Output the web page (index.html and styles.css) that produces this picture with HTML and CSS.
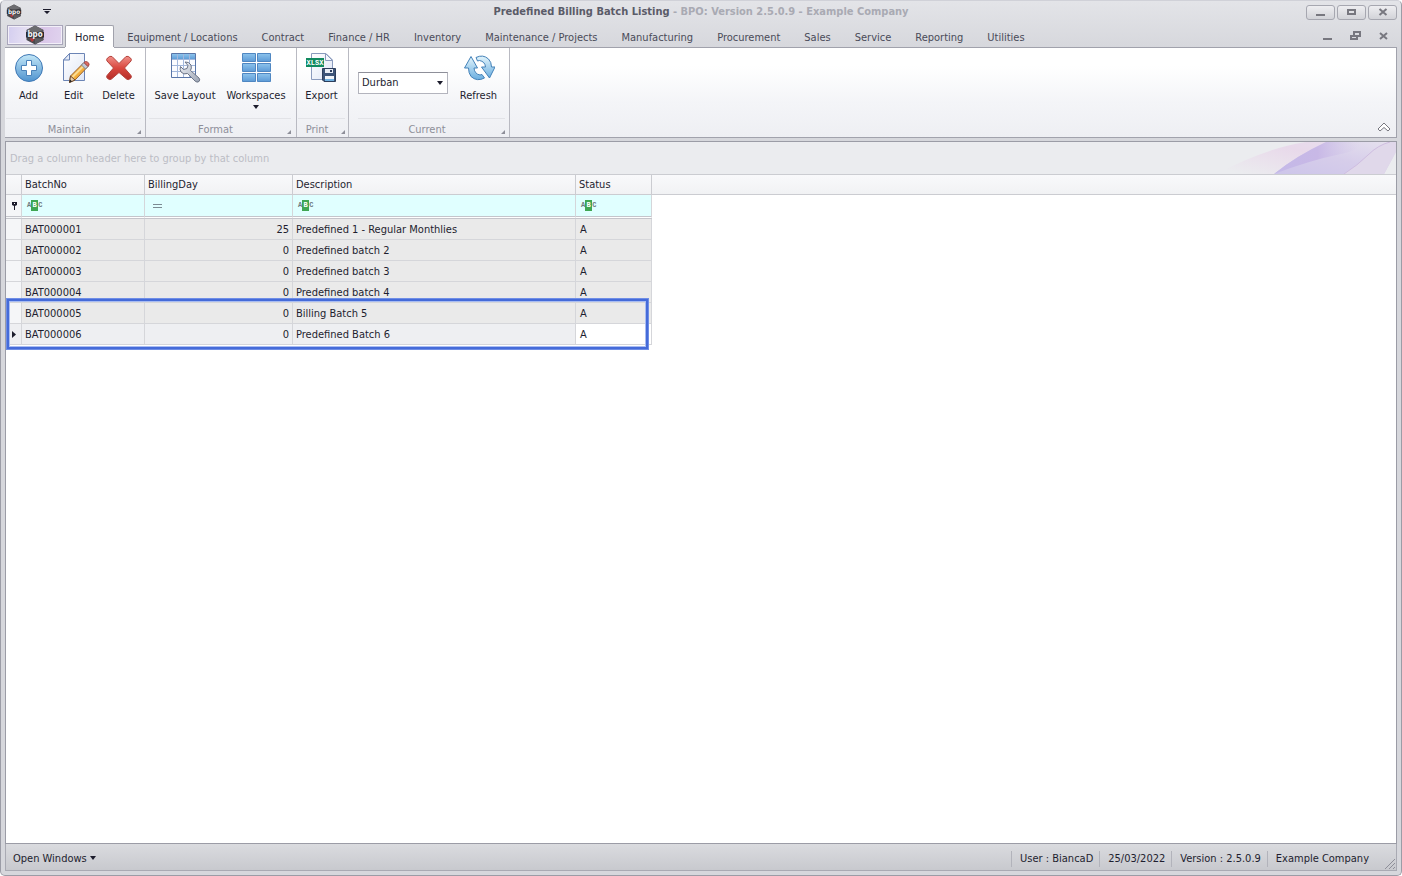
FILE: index.html
```html
<!DOCTYPE html>
<html lang="en">
<head>
  <meta charset="UTF-8">
  <meta name="viewport" content="width=device-width, initial-scale=1.0">
  <title>Predefined Billing Batch Listing</title>
  <link rel="stylesheet" href="styles.css">
</head>
<body>
  <svg class="defs" width="0" height="0" aria-hidden="true">
    <defs>
      <linearGradient id="blue" x1="0" y1="0" x2="0" y2="1">
        <stop offset="0" stop-color="#c4e8f8"/><stop offset="1" stop-color="#4f93cf"/>
      </linearGradient>
      <linearGradient id="tile" x1="0" y1="0" x2="0" y2="1">
        <stop offset="0" stop-color="#8cc3ec"/><stop offset="1" stop-color="#5c9ad6"/>
      </linearGradient>
      <linearGradient id="red" x1="0" y1="0" x2="0" y2="1">
        <stop offset="0" stop-color="#f0908a"/><stop offset="0.5" stop-color="#d9483f"/><stop offset="1" stop-color="#b52c27"/>
      </linearGradient>
      <linearGradient id="paper" x1="0" y1="0" x2="1" y2="1">
        <stop offset="0" stop-color="#ffffff"/><stop offset="1" stop-color="#dfe6f5"/>
      </linearGradient>
      <linearGradient id="steel" x1="0" y1="0" x2="1" y2="1">
        <stop offset="0" stop-color="#f2f4f8"/><stop offset="1" stop-color="#9aa3b3"/>
      </linearGradient>
      <linearGradient id="arrow" x1="0" y1="0" x2="0" y2="1">
        <stop offset="0" stop-color="#e3f5fc"/><stop offset="1" stop-color="#6aaee0"/>
      </linearGradient>
      <linearGradient id="lilac" x1="0" y1="1" x2="1" y2="0">
        <stop offset="0" stop-color="#cdc5ea"/><stop offset="0.5" stop-color="#d6cdea"/><stop offset="1" stop-color="#e6e2ee"/>
      </linearGradient>
      <linearGradient id="violet" x1="0" y1="0" x2="1" y2="0">
        <stop offset="0" stop-color="#c4b9e8"/><stop offset="0.5" stop-color="#c8b8e6"/><stop offset="1" stop-color="#d6cdea" stop-opacity="0"/>
      </linearGradient>
      <linearGradient id="pink" x1="0" y1="1" x2="1" y2="0">
        <stop offset="0.1" stop-color="#ead8ea" stop-opacity="0"/><stop offset="0.7" stop-color="#e8d9ea"/><stop offset="1" stop-color="#e8deee"/>
      </linearGradient>
      <symbol id="logo" viewBox="0 0 20 20">
        <path d="M10 0.5 18.500 5V15L10 19.500 1.500 15V5Z" fill="#4a4a4e"/>
        <path d="M10 0.5 18.500 5 10 8 1.500 5Z" fill="#6c6c70"/>
        <path d="M10 13 18.500 14V15L10 19.500Z" fill="#5c5c61"/>
        <path d="M1 7H19V12.500H1Z" fill="#2c2c30"/>
        <path d="M4.500 13.500 8.500 13 9 15 7 17Z" fill="#b3383b"/>
        <text x="10" y="12" text-anchor="middle" font-size="8" font-weight="bold" fill="#f4f4f6">bpo</text>
      </symbol>
    </defs>
  </svg>

  <div class="window">
    <header class="title-bar">
      <div class="quick-access">
        <svg width="16" height="16" aria-hidden="true"><use href="#logo"/></svg>
        <button class="icon-btn" aria-label="Customize Quick Access Toolbar">
          <svg width="8" height="6" viewBox="0 0 8 6"><path d="M0 0H8V1H0ZM1 2H7L4 5Z" fill="#1c1c2c"/></svg>
        </button>
      </div>
      <h1 class="title">Predefined Billing Batch Listing <span>- BPO: Version 2.5.0.9 - Example Company</span></h1>
      <div class="window-controls">
        <button aria-label="Minimize"><svg width="10" height="8" viewBox="0 0 10 8"><path d="M0 6H9V8H0Z" fill="#77777f"/></svg></button>
        <button aria-label="Maximize"><svg width="10" height="8" viewBox="0 0 10 8"><rect x="1" y="2" width="7" height="4" fill="none" stroke="#77777f" stroke-width="2"/></svg></button>
        <button aria-label="Close"><svg width="10" height="8" viewBox="0 0 10 8"><path d="M1.500 1 8.500 7M8.500 1 1.500 7" stroke="#77777f" stroke-width="2"/></svg></button>
      </div>
    </header>

    <nav class="tabs">
      <button class="app-btn" aria-label="Application menu"><svg width="20" height="20"><use href="#logo"/></svg></button>
      <a href="#home" class="tab active">Home</a>
      <a href="#equipment" class="tab">Equipment / Locations</a>
      <a href="#contract" class="tab">Contract</a>
      <a href="#finance" class="tab">Finance / HR</a>
      <a href="#inventory" class="tab">Inventory</a>
      <a href="#maintenance" class="tab">Maintenance / Projects</a>
      <a href="#manufacturing" class="tab">Manufacturing</a>
      <a href="#procurement" class="tab">Procurement</a>
      <a href="#sales" class="tab">Sales</a>
      <a href="#service" class="tab">Service</a>
      <a href="#reporting" class="tab">Reporting</a>
      <a href="#utilities" class="tab">Utilities</a>
      <div class="child-controls">
        <button class="icon-btn" aria-label="Minimize child"><svg width="12" height="10" viewBox="0 0 12 10"><path d="M1 7H10V9H1Z" fill="#77777f"/></svg></button>
        <button class="icon-btn" aria-label="Restore child"><svg width="12" height="10" viewBox="0 0 12 10"><path d="M4 4V1H10V5H7M1 5H7V8H1Z" fill="none" stroke="#77777f" stroke-width="2"/></svg></button>
        <button class="icon-btn" aria-label="Close child"><svg width="12" height="10" viewBox="0 0 12 10"><path d="M2 2 9 8M9 2 2 8" stroke="#77777f" stroke-width="2"/></svg></button>
      </div>
    </nav>

    <section class="ribbon" id="home">
      <div class="group maintain">
        <div class="tools">
          <button class="tool">
            <svg width="32" height="32" viewBox="0 0 32 32"><circle cx="16" cy="16" r="13.500" fill="url(#blue)" stroke="#3f78b5"/><path d="M13.500 8.500H18.500V13.500H23.500V18.500H18.500V23.500H13.500V18.500H8.500V13.500H13.500Z" fill="#fff" stroke="#4a82ba"/></svg>
            Add
          </button>
          <button class="tool">
            <svg width="32" height="32" viewBox="0 0 32 32"><path d="M11.500 1.500H26.500V28.500H5.500V8Z" fill="url(#paper)" stroke="#6b84b5"/><path d="M11.500 1.500V8H5.500Z" fill="#e6ecf8" stroke="#6b84b5"/><path d="M11.500 30.500 12.500 24 25.500 11 29.500 15 17 28Z" fill="#f3ae3c" stroke="#9a6330"/><path d="M14.500 25 26.500 13" stroke="#fbdc93" stroke-width="2"/><path d="M11.500 30.500 12.500 24 17 28Z" fill="#e9cfaa" stroke="#6b4a33"/><path d="M11.500 30.500 12 27.500 14 29.300Z" fill="#222"/><path d="M23.500 13 26 10.500 30 14.500 27.500 17Z" fill="#c3cad6" stroke="#7c8494"/><path d="M26 10.500 27.500 9.500Q29.500 9.500 31 11.500 31.500 13 30 14.500Z" fill="#dd6b62" stroke="#a3463f"/></svg>
            Edit
          </button>
          <button class="tool">
            <svg width="32" height="32" viewBox="0 0 32 32"><path d="M9 4.500 16 11.500 23 4.500Q25 3.500 27.500 6 29 7.500 28 9L21.500 16 28 23.500Q29 25 27.500 26.500 25 28.500 23.500 27L16 20.500 8.500 27Q7 28.500 4.500 26.500 3 25 4 23.500L10.500 16 4 9Q3 7.500 4.500 6 7 3.500 9 4.500Z" fill="url(#red)" stroke="#b5423b"/></svg>
            Delete
          </button>
        </div>
        <div class="caption"><span>Maintain</span><i class="launcher"></i></div>
      </div>

      <div class="group format">
        <div class="tools">
          <button class="tool">
            <svg width="32" height="32" viewBox="0 0 32 32"><path d="M2.500 1.500H26.500V25.500H2.500Z" fill="#fbfcff" stroke="#5a76a8"/><path d="M3 2H26V7.500H3Z" fill="url(#tile)"/><path d="M3 7.500H26M3 13.500H26M3 19.500H26M8.500 2V25M14.500 2V25M20.500 2V25" stroke="#a3b8dc"/><path d="M16 10Q20 9.500 22 13 23 16 21.500 18.500L30 26Q31.500 28 30 29.500 28 31 26 29L18.500 21.500Q14.500 23 12 20 10.500 17.500 11.500 14.500L14.500 17.500 18 16.500 19 13.500Z" fill="url(#steel)" stroke="#6c7486"/></svg>
            Save Layout
          </button>
          <button class="tool">
            <svg width="32" height="32" viewBox="0 0 32 32"><g fill="url(#tile)" stroke="#4f87c2"><path d="M2.500 1.500H15.500V9.500H2.500Z"/><path d="M17.500 1.500H30.500V9.500H17.500Z"/><path d="M2.500 11.500H15.500V19.500H2.500Z"/><path d="M17.500 11.500H30.500V19.500H17.500Z"/><path d="M2.500 21.500H15.500V29.500H2.500Z"/><path d="M17.500 21.500H30.500V29.500H17.500Z"/></g></svg>
            Workspaces
            <i class="arrow"></i>
          </button>
        </div>
        <div class="caption"><span>Format</span><i class="launcher"></i></div>
      </div>

      <div class="group print">
        <div class="tools">
          <button class="tool">
            <svg width="32" height="32" viewBox="0 0 32 32"><path d="M5.500 1.500H20L26.500 8V27.500H5.500Z" fill="url(#paper)" stroke="#8a9bbd"/><path d="M19.500 1.500V8.500H26.500Z" fill="#f6f8fd" stroke="#8a9bbd"/><path d="M0 6H18V15H0Z" fill="#118a5f"/><text class="xlsx" x="9" y="13">XLSX</text><path d="M16.500 16.500H29.500V29.500H18L16.500 28Z" fill="#3d5478" stroke="#2d3e5c"/><path d="M19 17H27V21H19Z" fill="#e8ecf4"/><path d="M24 18H26V20H24Z" fill="#2d3e5c"/><path d="M19 24H28V29H19Z" fill="#f1f4f9"/><path d="M19 27H28V29H19Z" fill="#6fb0e0"/></svg>
            Export
          </button>
        </div>
        <div class="caption"><span>Print</span><i class="launcher"></i></div>
      </div>

      <div class="group current">
        <div class="tools">
          <div class="site">
            <select aria-label="Site">
              <option>Durban</option>
            </select>
            <i class="arrow"></i>
          </div>
          <button class="tool">
            <svg width="32" height="32" viewBox="0 0 32 32"><path d="M13 5.500Q20 2 25.500 7 28.500 10 28.500 15H32L26.500 26 18.500 15H22.500Q22 9.500 16.500 8.500L14.500 9Z" fill="url(#arrow)" stroke="#4381b8"/><path d="M21.500 26Q14 30 8 24.500 5.500 21 5.500 16H1.500L8 4.500 14.500 16H11Q11.500 22 17 23L19 22.500Z" fill="url(#arrow)" stroke="#4381b8"/></svg>
            Refresh
          </button>
        </div>
        <div class="caption"><span>Current</span><i class="launcher"></i></div>
      </div>

      <button class="icon-btn collapse" aria-label="Collapse the ribbon">
        <svg width="14" height="10" viewBox="0 0 14 10"><path d="M7 1 13 7 11 9 7 5.500 3 9 1 7Z" fill="#fff" stroke="#77777f"/></svg>
      </button>
    </section>

    <main class="listing">
      <div class="group-panel">
        <span>Drag a column header here to group by that column</span>
        <svg width="260" height="32" viewBox="0 0 260 32" aria-hidden="true">
          <path d="M80 32Q130 6 170 0H208Q180 18 148 32Z" fill="url(#pink)"/>
          <path d="M138 32Q160 14 190 0H260V10L248 32Z" fill="url(#lilac)"/>
          <path d="M138 32Q160 14 190 0H225Q225 8 205 12 175 18 138 32Z" fill="url(#violet)"/>
          <path d="M208 32Q222 23 232 13T254 0H260V10L248 32Z" fill="#e0d8ea"/>
          <path d="M208 32Q222 23 232 13T254 0" fill="none" stroke="#cfbde0"/>
        </svg>
      </div>

      <div class="grid">
        <table>
          <colgroup>
            <col class="c-mark"><col class="c-batch"><col class="c-day"><col class="c-desc"><col class="c-status"><col>
          </colgroup>
          <thead>
            <tr>
              <th></th><th>BatchNo</th><th>BillingDay</th><th>Description</th><th>Status</th><th></th>
            </tr>
            <tr class="filter">
              <td><svg width="7" height="9" viewBox="0 0 7 9"><path d="M1 1H6V4L4 5V9H3V5L1 4Z" fill="#1c1c2c"/><path d="M3 2H4V3H3Z" fill="#fff"/></svg></td>
              <td><label><span class="abc">A<b>B</b>C</span><input type="text" aria-label="Filter BatchNo"></label></td>
              <td><label><span class="eq"></span><input type="text" aria-label="Filter BillingDay"></label></td>
              <td><label><span class="abc">A<b>B</b>C</span><input type="text" aria-label="Filter Description"></label></td>
              <td><label><span class="abc">A<b>B</b>C</span><input type="text" aria-label="Filter Status"></label></td>
              <td></td>
            </tr>
          </thead>
          <tbody>
            <tr><td></td><td>BAT000001</td><td>25</td><td>Predefined 1 - Regular Monthlies</td><td>A</td><td></td></tr>
            <tr><td></td><td>BAT000002</td><td>0</td><td>Predefined batch 2</td><td>A</td><td></td></tr>
            <tr><td></td><td>BAT000003</td><td>0</td><td>Predefined batch 3</td><td>A</td><td></td></tr>
            <tr><td></td><td>BAT000004</td><td>0</td><td>Predefined batch 4</td><td>A</td><td></td></tr>
            <tr><td></td><td>BAT000005</td><td>0</td><td>Billing Batch 5</td><td>A</td><td></td></tr>
            <tr class="focused"><td><svg width="4" height="7" viewBox="0 0 4 7"><path d="M0 0 4 3.500 0 7Z" fill="#1c1c2c"/></svg></td><td>BAT000006</td><td>0</td><td>Predefined Batch 6</td><td>A</td><td></td></tr>
          </tbody>
        </table>
        <div class="highlight"></div>
      </div>
    </main>

    <footer class="status-bar">
      <button class="open-windows">Open Windows <i class="arrow"></i></button>
      <div class="status-items">
        <span>User : BiancaD</span>
        <span>25/03/2022</span>
        <span>Version : 2.5.0.9</span>
        <span>Example Company</span>
      </div>
      <svg class="grip" width="12" height="12" viewBox="0 0 12 12" aria-hidden="true"><path d="M1 11 11 1M5 11 11 5M9 11 11 9" stroke="#8e8f99"/></svg>
    </footer>
  </div>
</body>
</html>
```
FILE: styles.css
```css
* {
  box-sizing: border-box;
}
body {
  margin: 0;
  background: #fff;
  color: #1e1e2f;
  font-family: "DejaVu Sans Condensed", "DejaVu Sans", Tahoma, sans-serif;
  font-size: 11px;
  line-height: 14px;
}
button, input, select {
  font: inherit;
  color: inherit;
}
button {
  background: none;
  border: none;
  padding: 0;
}
svg {
  display: block;
}
.defs {
  position: absolute;
}
.window {
  display: flex;
  flex-direction: column;
  height: 100vh;
  padding: 0 4px 4px;
  border: 1px solid #9b9ca6;
  border-top-color: #d0d1d8;
  border-radius: 5px;
  background: linear-gradient(#e3e4e8, #d6d7dc 48px, #d6d7dc);
}

/* title bar */
.title-bar {
  display: grid;
  grid-template-columns: 1fr auto 1fr;
  align-items: center;
  height: 22px;
}
.quick-access {
  display: flex;
  align-items: center;
  gap: 17px;
  padding-left: 1px;
}
.title {
  margin: 0;
  font-size: 11px;
  color: #5a5b68;
}
.title span {
  color: #a9aab3;
}
.window-controls {
  display: flex;
  justify-content: flex-end;
  gap: 2px;
}
.window-controls button {
  display: flex;
  align-items: center;
  justify-content: center;
  width: 29px;
  height: 15px;
  border: 1px solid #a6a7b0;
  border-radius: 3px;
  background: linear-gradient(#eeeef1, #d2d3d8);
}
.icon-btn {
  display: flex;
  align-items: center;
  justify-content: center;
  min-width: 16px;
}

/* ribbon tabs */
.tabs {
  display: flex;
  align-items: flex-end;
  gap: 2px;
  height: 24px;
}
.app-btn {
  display: flex;
  align-items: center;
  justify-content: center;
  width: 56px;
  height: 20px;
  margin: 0 0 2px 2px;
  border: 1px solid #a9a6bb;
  box-shadow: inset 0 0 0 1px #f2eff8;
  background: linear-gradient(100deg, #d3cdef, #e8e2f3 40%, #d9c5e8 60%, #e0d3ee);
}
.tab {
  height: 22px;
  padding: 5px 10px 0;
  border: 1px solid transparent;
  border-bottom: none;
  color: #4a4b59;
  text-decoration: none;
  white-space: nowrap;
}
.tab.active {
  position: relative;
  padding: 5px 9px 0;
  border-color: #a1a2ac;
  border-radius: 2px 2px 0 0;
  background: #fff;
  color: #1e1e2f;
  box-shadow: 0 1px #fff;
}
.child-controls {
  display: flex;
  align-self: center;
  gap: 12px;
  margin-left: auto;
  padding: 2px 5px 0 0;
}

/* ribbon */
.ribbon {
  display: flex;
  height: 91px;
  flex: none;
  border: 1px solid #a1a2ac;
  border-width: 1px 1px 1px 0;
  background: linear-gradient(#fff 20%, #f4f5f8 60%, #eeeff3);
}
.group {
  display: flex;
  flex-direction: column;
  border-right: 1px solid #b9bac2;
}
.tools {
  display: flex;
  flex: 1;
  padding-top: 4px;
}
.tool {
  display: flex;
  flex-direction: column;
  align-items: center;
  flex: 1;
  white-space: nowrap;
}
.tool svg {
  margin-bottom: 5px;
}
.maintain {
  width: 141px;
  padding: 0 4px 0 1px;
}
.format {
  width: 151px;
  padding: 0 5px 0 3px;
}
.format .tool {
  flex: auto;
}
.print {
  width: 52px;
  padding: 0 3px 0 1px;
}
.current {
  width: 161px;
  padding: 0 4px 0 9px;
}
.arrow {
  display: inline-block;
  border: 3px solid transparent;
  border-top: 4px solid #1c1c2c;
  border-bottom: none;
}
.tool .arrow {
  margin-top: 2px;
}
.caption {
  display: flex;
  align-items: center;
  height: 19px;
  padding-top: 3px;
  border-top: 1px solid #e2e3e7;
  color: #8e8f99;
}
.caption span {
  flex: 1;
  padding-right: 5px;
  text-align: center;
}
.launcher {
  align-self: flex-end;
  margin-bottom: 3px;
  border: 2px solid #8e8f99;
  border-top-color: transparent;
  border-left-color: transparent;
}
.site {
  display: grid;
  align-self: flex-start;
  align-items: center;
  width: 90px;
  margin: 20px 4px 0 0;
}
.site select, .site .arrow {
  grid-area: 1 / 1;
}
.site select {
  appearance: none;
  height: 22px;
  padding: 0 3px;
  border: 1px solid #b3b4bd;
  border-top-color: #8e8f99;
  border-radius: 0;
  background: #fff;
}
.site .arrow {
  justify-self: end;
  margin-right: 5px;
  pointer-events: none;
}
.xlsx {
  fill: #fff;
  font: bold 7px "Liberation Mono", monospace;
  text-anchor: middle;
}
.collapse {
  align-self: flex-end;
  margin: 0 4px 5px auto;
}

/* listing */
.listing {
  flex: 1;
  margin-top: 3px;
  border: 1px solid #9b9ca6;
  background: #fff;
}
.group-panel {
  display: flex;
  align-items: center;
  justify-content: space-between;
  height: 32px;
  padding-left: 4px;
  background: #ebecef;
  color: #bcbdc5;
}
.group-panel span {
  padding-top: 2px;
}
.grid {
  position: relative;
}
table {
  width: 100%;
  table-layout: fixed;
  border-collapse: separate;
  border-spacing: 0;
}
.c-mark {
  width: 16px;
}
.c-batch {
  width: 123px;
}
.c-day {
  width: 148px;
}
.c-desc {
  width: 283px;
}
.c-status {
  width: 76px;
}
th, td {
  height: 21px;
  padding: 0 3px;
  border-right: 1px solid #d5d6da;
  border-bottom: 1px solid #d5d6da;
  text-align: left;
  font-weight: normal;
  white-space: nowrap;
}
th {
  border-color: #cbccd1;
  border-top: 1px solid #cbccd1;
  background: linear-gradient(#f9f9fb, #f1f2f4);
}
th:last-child {
  border-right: none;
}
.filter td {
  height: 24px;
  border-bottom: 3px double #c4c5cb;
  background: #e0ffff;
  background-clip: padding-box;
}
.filter label {
  display: flex;
  align-items: center;
}
.filter input {
  flex: 1;
  min-width: 0;
  height: 14px;
  padding: 0;
  border: none;
  background: none;
  outline: none;
}
.abc {
  display: flex;
  align-items: center;
  margin-left: 2px;
  color: #6c7a80;
  font: bold 7px/11px "Liberation Mono", monospace;
}
.abc b {
  width: 7px;
  background: #3fa653;
  color: #fff;
  text-align: center;
}
.eq {
  width: 9px;
  height: 4px;
  margin-left: 5px;
  border: 1px solid #7c8b93;
  border-width: 1px 0;
}
tbody td {
  padding-top: 2px;
  background: #eaeaea;
}
tbody td:nth-child(3) {
  text-align: right;
}
tbody td:nth-child(5) {
  padding-left: 4px;
}
tbody td:first-child, .filter td:first-child {
  padding: 0 0 0 5px;
  background: #f5f6f8;
}
tbody .focused td:first-child {
  padding-left: 6px;
}
tbody .focused td {
  background: #eeeff2;
}
tbody .focused td:nth-child(5) {
  background: #fff;
}
tr td:last-child, tbody .focused td:last-child {
  border: none;
  background: none;
}
/* frame around the new batches */
.highlight {
  position: absolute;
  top: 125px;
  left: 1px;
  width: 641px;
  height: 50px;
  border: 2px solid #456bd9;
  box-shadow: 0 0 0 1px #6f8ee6, inset 0 0 0 1px #a9bdf2;
}

/* status bar */
.status-bar {
  display: flex;
  align-items: center;
  height: 27px;
  padding: 3px 0 0 7px;
  border: 1px solid #a9aab3;
  border-top: none;
  background: linear-gradient(#dadbdf, #c8c9ce);
}
.open-windows .arrow {
  margin-bottom: 2px;
}
.status-items {
  display: flex;
  margin-left: auto;
}
.status-items span {
  padding: 1px 6px 1px 8px;
  border-left: 1px solid #b2b3bb;
}
.grip {
  align-self: flex-end;
  margin-left: 9px;
}
```
